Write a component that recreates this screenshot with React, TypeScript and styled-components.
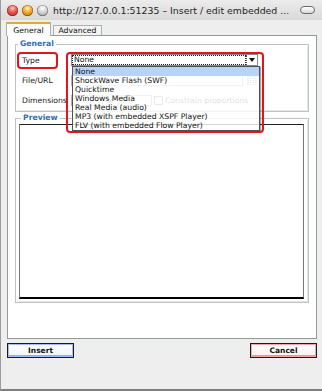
import styled, { createGlobalStyle } from "styled-components";

const GlobalStyle = createGlobalStyle`
  html, body {
    margin: 0;
    padding: 0;
    background: #e8e8e8;
  }
  body {
    font-family: "DejaVu Sans", Verdana, sans-serif;
  }
`;

const mediaTypes: string[] = [
  "None",
  "ShockWave Flash (SWF)",
  "Quicktime",
  "Windows Media",
  "Real Media (audio)",
  "MP3 (with embedded XSPF Player)",
  "FLV (with embedded Flow Player)",
];

function App() {
  return (
    <>
      <GlobalStyle />
      <Window>
        <TitleBar>
          <Light $color="red" />
          <Light $color="orange" />
          <Light $color="gray" />
          <Title>http://127.0.0.1:51235 – Insert / edit embedded ...</Title>
          <Pill />
        </TitleBar>

        <Body>
          <Tabs>
            <Tab $active>General</Tab>
            <Tab>Advanced</Tab>
          </Tabs>

          <Panel>
            <Group>
              <Legend>General</Legend>
              <Rows>
                <Row>
                  <Label>
                    Type
                    <Mark $w={41} $h={17} $l={-5} $t={-4} />
                  </Label>
                  <SelectWrap>
                    <SelectBox>
                      <SelectValue>None</SelectValue>
                      <SelectArrow />
                    </SelectBox>
                    <List>
                      {mediaTypes.map((t, i) => (
                        <Item key={t} $selected={i === 0}>
                          {t}
                        </Item>
                      ))}
                    </List>
                    <Mark $w={198} $h={81} $l={-5} $t={-2} />
                  </SelectWrap>
                </Row>
                <Row>
                  <Label>File/URL</Label>
                  <Input $w={172} />
                  <Browse>
                    <span />
                    <span />
                  </Browse>
                </Row>
                <Row>
                  <Label>Dimensions</Label>
                  <Input $w={32} />
                  <Times>x</Times>
                  <Input $w={34} />
                  <Check />
                  <CheckLabel>Constrain proportions</CheckLabel>
                </Row>
              </Rows>
            </Group>

            <Group $preview>
              <Legend>Preview</Legend>
              <Frame />
            </Group>
          </Panel>

          <Buttons>
            <Button $tone="blue">Insert</Button>
            <Button $tone="red">Cancel</Button>
          </Buttons>
        </Body>
      </Window>
    </>
  );
}

export default App;

const Window = styled.div`
  width: 322px;
  height: 391px;
  box-sizing: border-box;
  display: flex;
  flex-direction: column;
  background: #eeeeee;
  border-left: 1px solid #9c9c9c;
  border-bottom: 2px solid #7e7e7e;
  overflow: hidden;
`;

const TitleBar = styled.div`
  height: 20px;
  flex-shrink: 0;
  display: flex;
  align-items: center;
  gap: 4px;
  padding: 0 7px 0 6px;
  background: linear-gradient(#ececec, #d9d9d9);
`;

const lights: Record<string, string> = {
  red: "radial-gradient(circle at 50% 30%, #ffc4bd 0%, #e8554a 45%, #a9231b 100%)",
  orange: "radial-gradient(circle at 50% 30%, #fff0b0 0%, #f2a72a 45%, #b4680a 100%)",
  gray: "radial-gradient(circle at 50% 30%, #ffffff 0%, #cfcfcf 50%, #8c8c8c 100%)",
};

const Light = styled.span<{ $color: string }>`
  width: 11px;
  height: 11px;
  border-radius: 50%;
  flex-shrink: 0;
  background: ${(p) => lights[p.$color]};
  box-shadow: inset 0 0 0 0.5px rgba(0, 0, 0, 0.45);
`;

const Title = styled.div`
  margin-left: 1px;
  font-size: 9.4px;
  color: #1e1e1e;
  white-space: nowrap;
`;

const Pill = styled.span`
  margin-left: auto;
  width: 13px;
  height: 6px;
  border: 1px solid #6a6a6a;
  border-radius: 5px;
  background: linear-gradient(#ffffff, #d8d8d8);
`;

const Body = styled.div`
  flex: 1;
  display: flex;
  flex-direction: column;
  padding: 2px 5px 0 6px;
`;

const Tabs = styled.div`
  display: flex;
  align-items: flex-end;
  gap: 2px;
  height: 13px;
  margin-left: -1px;
  position: relative;
  z-index: 1;
`;

const Tab = styled.div<{ $active?: boolean }>`
  box-sizing: border-box;
  display: flex;
  align-items: center;
  justify-content: center;
  font-size: 7.7px;
  color: #111;
  border: 1px solid #a9b1b3;
  border-bottom: none;
  width: ${(p) => (p.$active ? "45px" : "49px")};
  height: ${(p) => (p.$active ? "14px" : "10px")};
  margin-bottom: ${(p) => (p.$active ? "-1px" : "0")};
  background: ${(p) => (p.$active ? "#fcfcfc" : "#f4f4f2")};
  border-top: ${(p) => (p.$active ? "2px solid #eba43a" : "1px solid #a9b1b3")};
`;

const Panel = styled.div`
  box-sizing: border-box;
  height: 304px;
  background: #ffffff;
  border: 1px solid #919b9c;
  padding: 3px 7px 0 7px;
  display: flex;
  flex-direction: column;
  gap: 1px;
`;

const Group = styled.fieldset<{ $preview?: boolean }>`
  margin: 0;
  padding: ${(p) => (p.$preview ? "1px 4px 3px 3px" : "0")};
  min-width: 0;
  border: 1px solid #bfc3c3;
  box-shadow: inset 1px 1px 0 #ffffff, inset -1px -1px 0 #e6e8e8;
`;

const Legend = styled.legend`
  padding: 0 2px;
  margin-left: 2px;
  font-size: 7.7px;
  line-height: 10px;
  font-weight: bold;
  color: #2e6cb5;
`;

const Rows = styled.div`
  display: flex;
  flex-direction: column;
  padding: 1px 0 1px 6px;
`;

const Row = styled.div`
  display: flex;
  align-items: center;
  height: 20px;
`;

const Label = styled.div`
  position: relative;
  width: 49px;
  flex-shrink: 0;
  font-size: 7.7px;
  color: #1a1a1a;
  white-space: nowrap;
`;

const Mark = styled.span<{ $w: number; $h: number; $l: number; $t: number }>`
  position: absolute;
  z-index: 6;
  box-sizing: border-box;
  left: ${(p) => p.$l}px;
  top: ${(p) => p.$t}px;
  width: ${(p) => p.$w}px;
  height: ${(p) => p.$h}px;
  border: 2px solid #e5131b;
  border-radius: 4px;
  pointer-events: none;
`;

const SelectWrap = styled.div`
  position: relative;
  width: 187px;
  height: 12px;
`;

const SelectBox = styled.div`
  box-sizing: border-box;
  height: 12px;
  display: flex;
  border: 1px solid #8a8a8a;
  background: #fff;
`;

const SelectValue = styled.div`
  flex: 1;
  font-size: 7.7px;
  line-height: 9px;
  padding-left: 2px;
  outline: 1px dotted #222;
  outline-offset: -1px;
  color: #111;
`;

const SelectArrow = styled.div`
  width: 10px;
  position: relative;
  border-left: 1px dotted #555;
  &::after {
    content: "";
    position: absolute;
    left: 2px;
    top: 3px;
    border-left: 3px solid transparent;
    border-right: 3px solid transparent;
    border-top: 4px solid #111;
  }
`;

const List = styled.div`
  position: absolute;
  z-index: 5;
  left: 1px;
  top: 12px;
  width: 188px;
  box-sizing: border-box;
  border: 1px solid #505050;
  background: rgba(255, 255, 255, 0.82);
  box-shadow: 1px 1px 1px rgba(0, 0, 0, 0.35);
`;

const Item = styled.div<{ $selected?: boolean }>`
  height: 9px;
  line-height: 9px;
  padding-left: 2px;
  font-size: 7.7px;
  color: #111;
  white-space: nowrap;
  background: ${(p) => (p.$selected ? "#b7d3fa" : "transparent")};
`;

const Input = styled.div<{ $w: number }>`
  box-sizing: border-box;
  width: ${(p) => p.$w}px;
  height: 11px;
  border: 1px solid #b5b5b5;
  background: #fff;
`;

const Browse = styled.div`
  width: 10px;
  height: 9px;
  margin-left: 4px;
  display: flex;
  gap: 2px;
  justify-content: center;
  align-items: center;
  border: 1px solid #c4c4c4;
  box-sizing: border-box;
  span {
    width: 2px;
    height: 5px;
    border-left: 1px dotted #888;
    border-right: 1px dotted #888;
  }
`;

const Times = styled.span`
  width: 15px;
  text-align: center;
  font-size: 7.7px;
  color: #222;
`;

const Check = styled.span`
  width: 7px;
  height: 7px;
  margin-left: 2px;
  border: 1px solid #8c8c8c;
  border-radius: 1px;
  background: #fff;
`;

const CheckLabel = styled.span`
  margin-left: 2px;
  font-size: 7.7px;
  color: #555;
  white-space: nowrap;
`;

const Frame = styled.div`
  height: 172px;
  background: #ffffff;
  border: 1px solid #777;
  border-top-color: #222;
  border-bottom: 2px solid #000;
`;

const Buttons = styled.div`
  display: flex;
  justify-content: space-between;
  margin-top: 4px;
`;

const Button = styled.div<{ $tone: "blue" | "red" }>`
  box-sizing: border-box;
  width: 67px;
  height: 15px;
  display: flex;
  align-items: center;
  justify-content: center;
  font-size: 7.5px;
  font-weight: bold;
  color: #111;
  border: 1px solid #1c1c1c;
  background: ${(p) =>
    p.$tone === "blue"
      ? "linear-gradient(#ffffff, #eef3fc)"
      : "linear-gradient(#ffffff, #fcefef)"};
  box-shadow: ${(p) =>
    p.$tone === "blue"
      ? "inset 0 0 0 1px #9fbdee, inset 0 -1px 0 1px #8cb0ec"
      : "inset 0 0 0 1px #f0a6a6, inset 0 -1px 0 1px #ec9595"};
`;
